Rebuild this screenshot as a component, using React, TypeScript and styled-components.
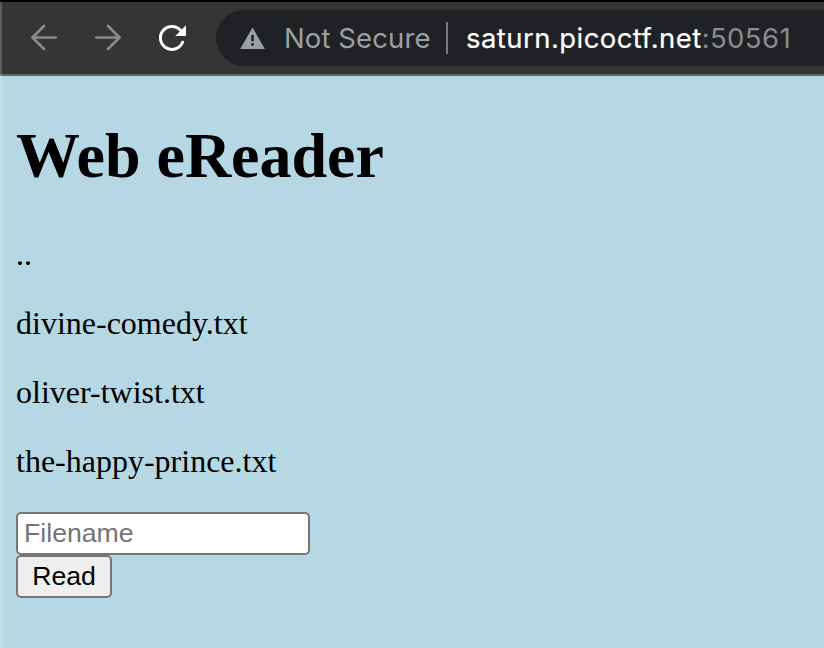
import React from "react";
import styled, { createGlobalStyle } from "styled-components";

const GlobalStyle = createGlobalStyle`
  * { box-sizing: border-box; }
  html, body { margin: 0; padding: 0; background: #b6d8e4; }
  body { overflow: hidden; }
`;

const Window = styled.div`
  position: relative;
  display: flex;
  flex-direction: column;
  width: 824px;
  height: 648px;
  overflow: hidden;
  background: #b6d8e4;
`;

const WindowEdge = styled.div`
  position: absolute;
  left: 0;
  top: 2px;
  bottom: 0;
  width: 2px;
  background: rgba(255, 255, 255, 0.2);
`;

const Toolbar = styled.header`
  display: flex;
  flex: none;
  align-items: center;
  height: 76px;
  border-top: 2px solid #000;
  border-bottom: 2px solid #636363;
  background: #353535;
`;

const NavButtons = styled.nav`
  display: flex;
  width: 216px;
  padding-left: 28px;
  gap: 32px;
`;

const NavButton = styled.button<{ $active?: boolean }>`
  width: 32px;
  height: 32px;
  padding: 0;
  border: 0;
  background: none;
  color: ${(p) => (p.$active ? "#ffffff" : "#8b8b8b")};

  svg {
    display: block;
  }
`;

const AddressBar = styled.div`
  display: flex;
  flex: 1;
  align-items: center;
  height: 56px;
  padding-left: 24px;
  border-radius: 28px 0 0 28px;
  background: #202125;
  font-family: Inter, "Liberation Sans", sans-serif;
  font-size: 27.5px;
  line-height: 56px;
  white-space: nowrap;
`;

const SecurityLabel = styled.span`
  width: 180px;
  padding-left: 18px;
  color: #9aa0a4;
  letter-spacing: 0.1px;
`;

const Separator = styled.span`
  width: 2px;
  height: 32px;
  margin-right: 18px;
  background: #77797c;
`;

const Host = styled.span`
  color: #ffffff;
  letter-spacing: 0.44px;
  -webkit-text-stroke: 0.2px currentColor;
`;

const Port = styled.span`
  color: #8a8b8e;
  letter-spacing: 0.4px;
`;

const Page = styled.main`
  padding: 43px 16px 0;
  color: #000;
  font-family: "Liberation Serif", "Times New Roman", serif;
`;

const Title = styled.h1`
  margin: 0 0 43px;
  font-size: 64px;
  line-height: 74px;
`;

const FileName = styled.p`
  margin: 0 0 32px;
  font-size: 32px;
  line-height: 37px;
`;

const ReadForm = styled.form`
  display: flex;
  flex-direction: column;
  align-items: flex-start;
`;

const FilenameInput = styled.input`
  width: 294px;
  height: 43px;
  padding: 0 6px;
  border: 2px solid #767676;
  border-radius: 5px;
  background: #fff;
  font: 26.67px "Liberation Sans", Arial, sans-serif;

  &::placeholder {
    color: #757575;
  }
`;

const ReadButton = styled.button`
  width: 96px;
  height: 43px;
  padding: 0;
  border: 2px solid #767676;
  border-radius: 5px;
  background: #efefef;
  color: #000;
  font: 26.67px "Liberation Sans", Arial, sans-serif;
`;

const files = ["..", "divine-comedy.txt", "oliver-twist.txt", "the-happy-prince.txt"];

export default function App() {
  return (
    <>
      <GlobalStyle />
      <Window>
        <Toolbar>
          <NavButtons>
            <NavButton aria-label="Back">
              <svg width="32" height="32" viewBox="0 0 32 32" fill="none" stroke="currentColor" strokeWidth="2.7" strokeLinecap="round" strokeLinejoin="round">
                <path d="M27.7 15.5H4.5M16 4L4.5 15.5L16 27" />
              </svg>
            </NavButton>
            <NavButton aria-label="Forward">
              <svg width="32" height="32" viewBox="0 0 32 32" fill="none" stroke="currentColor" strokeWidth="2.7" strokeLinecap="round" strokeLinejoin="round">
                <path d="M4.3 15.5H27.5M16 4L27.5 15.5L16 27" />
              </svg>
            </NavButton>
            <NavButton aria-label="Reload" $active>
              <svg width="32" height="32" viewBox="0 0 32 32" fill="none">
                <path d="M26.6 20.2A11.5 11.5 0 1 1 24.3 8" stroke="currentColor" strokeWidth="3" strokeLinecap="round" />
                <path d="M30 3.3V14H19.3Z" fill="currentColor" />
              </svg>
            </NavButton>
          </NavButtons>
          <AddressBar>
            <svg width="26" height="24" viewBox="0 0 26 24">
              <path fill="#9aa0a4" fillRule="evenodd" d="M12.6 1.4L24.8 23H0.2ZM11.2 9V15.2H13.8V9ZM11.2 17.2V19.8H13.8V17.2Z" />
            </svg>
            <SecurityLabel>Not Secure</SecurityLabel>
            <Separator />
            <Host>saturn.picoctf.net</Host>
            <Port>:50561</Port>
          </AddressBar>
        </Toolbar>
        <Page>
          <Title>Web eReader</Title>
          {files.map((file) => (
            <FileName key={file}>{file}</FileName>
          ))}
          <ReadForm onSubmit={(e) => e.preventDefault()}>
            <FilenameInput placeholder="Filename" />
            <ReadButton type="submit">Read</ReadButton>
          </ReadForm>
        </Page>
        <WindowEdge />
      </Window>
    </>
  );
}
